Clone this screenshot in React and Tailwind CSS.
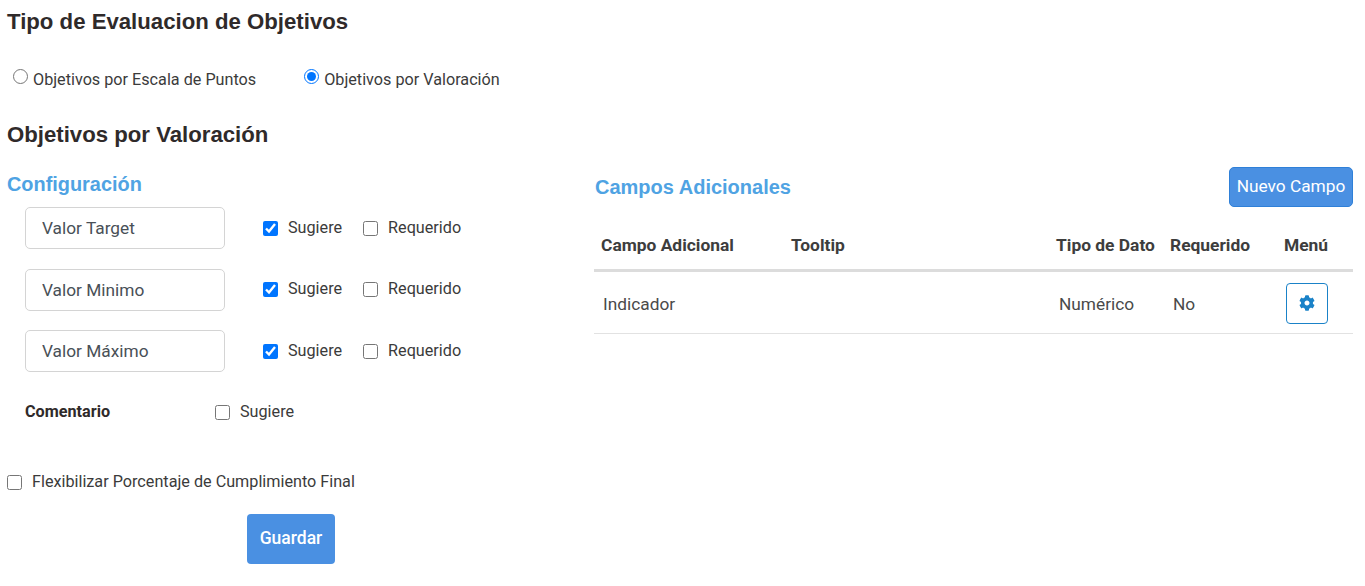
import React from 'react';
import { FaCog } from 'react-icons/fa';

const heading = "font-['Liberation_Sans',sans-serif] font-bold";

const Check = ({ label, checked, className = '' }) => (
  <label className={`flex items-center ${className}`}>
    <input type="checkbox" defaultChecked={checked} className="w-[15px] h-[15px] m-0 accent-[#0075ff]" />
    <span className="ml-[10px] text-[16.2px] leading-[20px] relative -top-[0.5px]">{label}</span>
  </label>
);

const ConfigRow = ({ value }) => (
  <div className="flex items-center h-[42px] ml-[25px] mb-[19.5px]">
    <input
      readOnly
      value={value}
      className="w-[200px] h-[42px] px-[16px] border border-[#d4d4d4] rounded-[5px] text-[17.3px] text-[#495057] outline-none"
    />
    <Check label="Sugiere" checked className="ml-[38px]" />
    <Check label="Requerido" className="ml-[21px]" />
  </div>
);

const App = () => {
  return (
    <div className="w-[1365px] h-[586px] overflow-hidden bg-white text-[#3b3b3b] font-['Roboto',sans-serif]">
      <h1 className={`${heading} text-[22.2px] leading-[24px] text-[#2f2a2a] pl-[7px] pt-[10px]`}>
        Tipo de Evaluacion de Objetivos
      </h1>

      <div className="flex items-center h-[20px] mt-[36px] text-[16.2px]">
        <label className="flex items-center ml-[13px]">
          <input type="radio" name="tipo" className="w-[15px] h-[15px] m-0 accent-[#0075ff] relative -top-[4px]" />
          <span className="ml-[5px]">Objetivos por Escala de Puntos</span>
        </label>
        <label className="flex items-center ml-[48px]">
          <input type="radio" name="tipo" defaultChecked className="w-[15px] h-[15px] m-0 accent-[#0075ff] relative -top-[4px]" />
          <span className="ml-[5px]">Objetivos por Valoración</span>
        </label>
      </div>

      <h2 className={`${heading} text-[22.2px] leading-[24px] text-[#2f2a2a] pl-[7px] mt-[33px]`}>
        Objetivos por Valoración
      </h2>

      <div className="flex">
        <div className="w-[594px] shrink-0">
          <h3 className={`${heading} text-[19.9px] leading-[24px] text-[#4fa3e3] pl-[7px] mt-[25px] mb-[11px]`}>
            Configuración
          </h3>
          <ConfigRow value="Valor Target" />
          <ConfigRow value="Valor Minimo" />
          <ConfigRow value="Valor Máximo" />

          <div className="flex items-center h-[20px] ml-[25px] mt-[30.5px]">
            <span className="w-[190px] text-[16.2px] font-bold text-[#2f2a2a]">Comentario</span>
            <Check label="Sugiere" />
          </div>

          <Check label="Flexibilizar Porcentaje de Cumplimiento Final" className="ml-[7px] mt-[50px]" />

          <button className="block ml-[247px] mt-[21px] w-[88px] h-[50px] bg-[#4a90e2] rounded-[4px] text-white text-[17.5px] font-medium">
            Guardar
          </button>
        </div>

        <div className="w-[759px] shrink-0">
          <div className="flex items-center justify-between h-[40px] mt-[20px]">
            <h3 className={`${heading} text-[20px] leading-[24px] text-[#4fa3e3] pl-[1px]`}>Campos Adicionales</h3>
            <button className="w-[124px] h-[40px] bg-[#4a90e2] border border-[#2f80d8] rounded-[5px] text-white text-[17.3px]">
              Nuevo Campo
            </button>
          </div>

          <table className="w-full table-fixed border-collapse mt-[15px]">
            <thead>
              <tr className="h-[48px] border-b-[3px] border-[#dcdcdc] text-left text-[17.4px] font-bold text-[#3d3d3d]">
                <th className="w-[190px] pl-[7px] font-bold">Campo Adicional</th>
                <th className="w-[265px] pl-[7px] font-bold">Tooltip</th>
                <th className="w-[114px] pl-[7px] font-bold">Tipo de Dato</th>
                <th className="w-[114px] font-bold pl-[7px]">Requerido</th>
                <th className="pl-[7px] font-bold">Menú</th>
              </tr>
            </thead>
            <tbody>
              <tr className="h-[63px] border-b border-[#e2e2e2] text-[17.3px] text-[#4a4a4a]">
                <td className="pl-[9px] pt-[6px]">Indicador</td>
                <td></td>
                <td className="pl-[10px] pt-[6px]">Numérico</td>
                <td className="pl-[10px] pt-[6px]">No</td>
                <td className="pl-[9px] pt-[2px]">
                  <button className="flex items-center justify-center w-[42px] h-[41px] border border-[#1a82c8] rounded-[4px]">
                    <FaCog className="w-[16px] h-[16px] text-[#1a82c8]" />
                  </button>
                </td>
              </tr>
            </tbody>
          </table>
        </div>
      </div>
    </div>
  );
};

export default App;
